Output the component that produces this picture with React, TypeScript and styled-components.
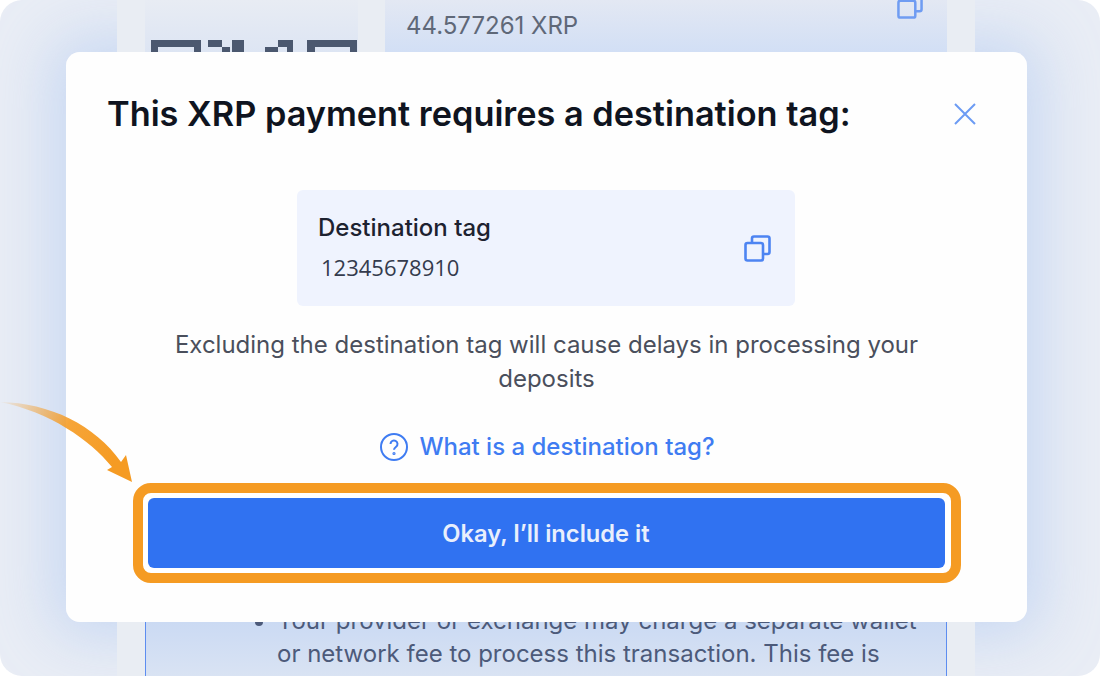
import React from "react";
import styled, { createGlobalStyle } from "styled-components";

const GlobalStyle = createGlobalStyle`
  html, body {
    margin: 0;
    padding: 0;
    background: #ffffff;
  }
`;

const Frame = styled.div`
  position: relative;
  width: 1100px;
  height: 676px;
  overflow: hidden;
  border-radius: 22px;
  background: #e9edf5;
  font-family: Inter, "Liberation Sans", sans-serif;
`;

/* blue halo of the dialog, it sits behind the page card */
const Glow = styled.div`
  position: absolute;
  left: 66px;
  top: 52px;
  width: 961px;
  height: 570px;
  border-radius: 14px;
  box-shadow: 0 0 60px 14px rgba(150, 185, 240, 0.4);
`;

const Card = styled.div`
  position: relative;
  display: flex;
  flex-direction: column;
  gap: 24px;
  width: 858px;
  height: 676px;
  margin-left: 117px;
  padding: 0 28px;
  box-sizing: border-box;
  background: #e9edf3;
`;

const TopRow = styled.div`
  display: flex;
  gap: 27px;
  height: 574px;
`;

const QrColumn = styled.div`
  flex: none;
  width: 213px;
  padding: 40px 0 0 6px;
  box-sizing: border-box;
  background: linear-gradient(180deg, #e8ecf3 0, #dde5f3 52px);
`;

const QrSvg = styled.svg`
  display: block;
`;

const PaymentPanel = styled.div`
  flex: 1;
  display: flex;
  justify-content: space-between;
  padding: 14px 24px 0 21px;
  background: linear-gradient(180deg, #e3e8f3 0, #d2dff5 52px, #d2dff5 100%);
  color: #5f6878;
  font-size: 24px;
  line-height: 24px;
`;

const TopCopy = styled.div`
  margin-top: -21px;
  color: #6f9cf2;
`;

const Notice = styled.div`
  flex: 1;
  padding: 5px 20px 0 131px;
  border: 1px solid #5d8df0;
  border-bottom: 0;
  background: linear-gradient(180deg, #cbdaf3 24px, #d9e3f3 100%);
  color: #4c5a7a;
  font-size: 24px;
  line-height: 33px;
`;

const NoticeList = styled.ul`
  margin: 0;
  padding: 0;
`;

const Modal = styled.div`
  position: absolute;
  left: 66px;
  top: 52px;
  width: 961px;
  height: 570px;
  padding: 0 41px;
  box-sizing: border-box;
  border-radius: 14px;
  background: #fefefe;
  display: flex;
  flex-direction: column;
  align-items: center;
`;

const ModalHeader = styled.div`
  align-self: stretch;
  display: flex;
  align-items: center;
  justify-content: space-between;
  height: 124px;
  color: #0f1420;
`;

const Title = styled.h1`
  margin: 0;
  font-size: 34.3px;
  font-weight: 600;
  line-height: 40px;
`;

const CloseButton = styled.div`
  display: flex;
  margin-right: 9px;
  color: #6c9bf4;
`;

const TagBox = styled.div`
  display: flex;
  align-items: center;
  justify-content: space-between;
  width: 498px;
  height: 116px;
  margin: 14px 1px 0 0;
  padding: 0 24px 0 21px;
  box-sizing: border-box;
  border-radius: 6px;
  background: #eff3fe;
`;

const TagText = styled.div`
  margin-bottom: 2px;
`;

const TagLabel = styled.div`
  color: #1d2230;
  font-size: 24px;
  font-weight: 500;
  line-height: 28px;
`;

const TagValue = styled.div`
  margin: 11px 0 0 3px;
  color: #343b4d;
  font-family: "Open Sans", sans-serif;
  font-size: 22px;
  line-height: 28px;
`;

const TagCopy = styled.div`
  display: flex;
  color: #4d84f2;
`;

const Warning = styled.p`
  margin: 22px 0 0;
  width: 790px;
  color: #4a4f5c;
  font-size: 24px;
  line-height: 34px;
  text-align: center;
`;

const HelpLink = styled.div`
  display: flex;
  align-items: center;
  gap: 11px;
  margin: 36px 0 0 2px;
  color: #3f7cf2;
  font-size: 24px;
  font-weight: 500;
  line-height: 30px;
`;

const Highlight = styled.div`
  width: 828px;
  height: 100px;
  margin-top: 21px;
  padding: 5px 6px 5px 5px;
  box-sizing: border-box;
  border: 10px solid #f59b23;
  border-radius: 18px;
  background: #ffffff;
`;

const PrimaryButton = styled.button`
  display: block;
  width: 100%;
  height: 100%;
  padding: 0;
  border: 0;
  border-radius: 6px;
  background: #3072f1;
  color: #e9effc;
  font-family: inherit;
  font-size: 23.7px;
  font-weight: 600;
`;

const Arrow = styled.svg`
  position: absolute;
  left: 0;
  top: 396px;
`;

const CopyIcon = ({ size }: { size: number }) => (
  <svg width={size} height={size} viewBox="0 0 27 27" fill="none" stroke="currentColor" strokeWidth="2.6">
    <rect x="1.5" y="8" width="17.5" height="17.5" rx="2" />
    <path d="M8 7.5V3.5a2 2 0 0 1 2-2h13.5a2 2 0 0 1 2 2V17a2 2 0 0 1-2 2H19.5" />
  </svg>
);

const QrTop = () => (
  <QrSvg width="206" height="12" viewBox="151 40 206 12" fill="#4b586f">
    <path fillRule="evenodd" d="M151 40h50v12h-50zM158 47h36v5h-36z" />
    <path d="M208 40h14v7h8v5h-8v-5h-14zM232 40h12v12h-12z" />
    <path d="M265 47h13v-7h15v12h-6v-5h-9v5h-13z" />
    <path fillRule="evenodd" d="M307 40h50v12h-50zM315 47h35v5h-35z" />
  </QrSvg>
);

const App = () => (
  <>
    <GlobalStyle />
    <Frame>
      <Glow />
      <Card>
        <TopRow>
          <QrColumn>
            <QrTop />
          </QrColumn>
          <PaymentPanel>
            44.577261 XRP
            <TopCopy>
              <CopyIcon size={26} />
            </TopCopy>
          </PaymentPanel>
        </TopRow>
        <Notice>
          <NoticeList>
            <li>Your provider or exchange may charge a separate wallet or network fee to process this transaction. This fee is</li>
          </NoticeList>
        </Notice>
      </Card>
      <Modal>
        <ModalHeader>
          <Title>This XRP payment requires a destination tag:</Title>
          <CloseButton>
            <svg width="24" height="24" viewBox="0 0 24 24" fill="none" stroke="currentColor" strokeWidth="2">
              <path d="M2 2l20 20M22 2L2 22" />
            </svg>
          </CloseButton>
        </ModalHeader>
        <TagBox>
          <TagText>
            <TagLabel>Destination tag</TagLabel>
            <TagValue>12345678910</TagValue>
          </TagText>
          <TagCopy>
            <CopyIcon size={27} />
          </TagCopy>
        </TagBox>
        <Warning>Excluding the destination tag will cause delays in processing your deposits</Warning>
        <HelpLink>
          <svg width="28" height="28" viewBox="0 0 28 28" fill="none" stroke="currentColor" strokeWidth="2">
            <circle cx="14" cy="14" r="13" />
            <path d="M10.5 11a3.5 3.5 0 1 1 5.6 2.8c-1.3 1-2.1 1.6-2.1 3" />
            <circle cx="14" cy="20.5" r="0.6" />
          </svg>
          What is a destination tag?
        </HelpLink>
        <Highlight>
          <PrimaryButton>Okay, I’ll include it</PrimaryButton>
        </Highlight>
      </Modal>
      <Arrow width="140" height="90" viewBox="0 396 140 90">
        <defs>
          <linearGradient id="swoosh" x1="0" y1="0" x2="1" y2="0.3">
            <stop offset="0" stopColor="#f59b23" stopOpacity="0.05" />
            <stop offset="0.55" stopColor="#f59b23" stopOpacity="0.9" />
            <stop offset="1" stopColor="#f59b23" />
          </linearGradient>
        </defs>
        <path
          d="M0 402C50 403 95 425 121 462L126 455L132 482L107 470L112 467C90 440 50 412 0 402Z"
          fill="url(#swoosh)"
        />
      </Arrow>
    </Frame>
  </>
);

export default App;
